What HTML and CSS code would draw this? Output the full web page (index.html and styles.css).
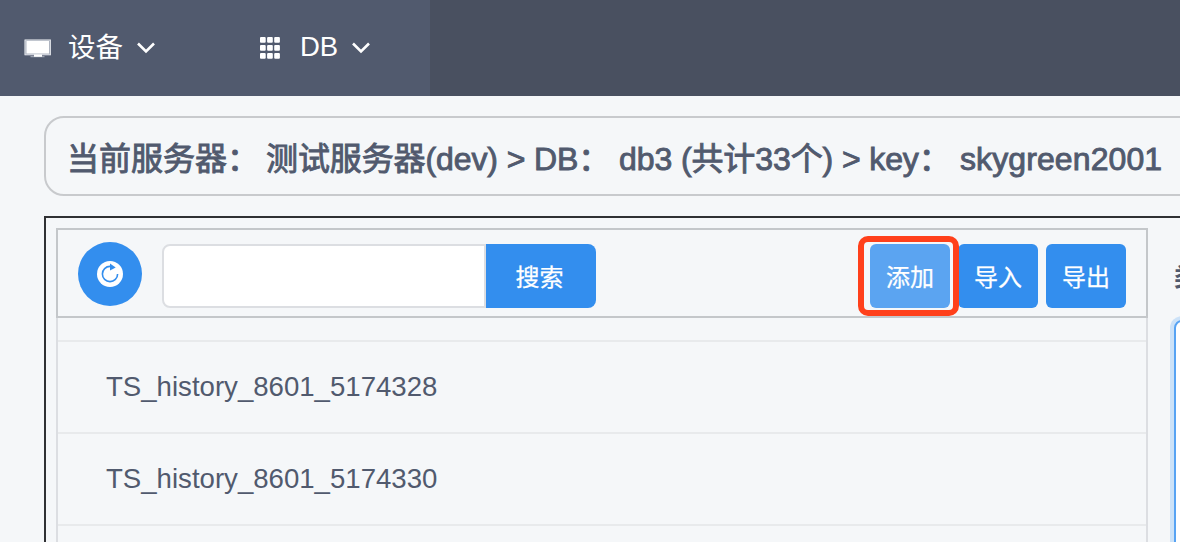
FILE: index.html
```html
<!DOCTYPE html>
<html lang="zh-CN">
<head>
<meta charset="utf-8">
<title>DB</title>
<link rel="stylesheet" href="styles.css">
</head>
<body>
<div class="page">
  <header class="topbar">
    <nav class="menu">
      <a class="menu-item menu-device">
        <svg class="icon-tv" width="28" height="20" viewBox="0 0 28 20"><rect x=".5" y=".5" width="26.5" height="15.8" fill="#aeb4c0"/><rect x="1" y="1" width="25.5" height="14.8" fill="none" stroke="#e8eaee" stroke-width=".7"/><rect x="2.5" y="2" width="22.5" height="12.5" fill="#fff"/><path d="M6.5 17.2h14v1h-14z" fill="#aeb4c0"/><path d="M10 15.5h8v2.3h-8z" fill="#fff"/></svg>
        <span class="menu-cjk">设备</span>
        <svg class="chevron" width="20" height="14" viewBox="0 0 20 14"><path d="M2 2.5l8 8 8-8"/></svg>
      </a>
      <a class="menu-item menu-db">
        <svg class="icon-grid" width="20" height="22" viewBox="0 0 20 22" fill="#fff"><rect width="5.7" height="5.7" rx="1"/><rect x="7.1" width="5.7" height="5.7" rx="1"/><rect x="14.2" width="5.7" height="5.7" rx="1"/><rect y="8" width="5.7" height="5.7" rx="1"/><rect x="7.1" y="8" width="5.7" height="5.7" rx="1"/><rect x="14.2" y="8" width="5.7" height="5.7" rx="1"/><rect y="16" width="5.7" height="5.7" rx="1"/><rect x="7.1" y="16" width="5.7" height="5.7" rx="1"/><rect x="14.2" y="16" width="5.7" height="5.7" rx="1"/></svg>
        <span class="menu-latin">DB</span>
        <svg class="chevron" width="20" height="14" viewBox="0 0 20 14"><path d="M2 2.5l8 8 8-8"/></svg>
      </a>
    </nav>
  </header>

  <div class="crumb">
    <span class="crumb-server">当前服务器：</span><span class="crumb-db">测试服务器(dev) &gt; DB：</span><span class="crumb-count">db3 (共计33个) &gt; key：</span><span class="crumb-key">skygreen2001</span>
  </div>

  <main class="workspace">
    <section class="keys">
      <div class="toolbar">
        <button class="refresh" aria-label="refresh"><svg width="26" height="26" viewBox="0 0 26 26"><circle cx="13" cy="13" r="13" fill="#fff"/><path d="M20.6 13A7.6 7.6 0 1 1 13 5.4" fill="none" stroke="#338eee" stroke-width="1.6"/><path d="M13 2.4v7l5.7-3z" fill="#338eee"/></svg></button>
        <input class="search" type="text">
        <button class="btn btn-search">搜索</button>
        <div class="actions">
          <button class="btn btn-add">添加</button>
          <button class="btn">导入</button>
          <button class="btn">导出</button>
        </div>
      </div>
      <div class="list">
        <div class="row row-cut"></div>
        <div class="row">TS_history_8601_5174328</div>
        <div class="row">TS_history_8601_5174330</div>
        <div class="row"></div>
      </div>
    </section>
    <section class="detail">
      <div class="detail-label">类型</div>
      <div class="editor"></div>
    </section>
  </main>
</div>
</body>
</html>
```
FILE: styles.css
```css
* { box-sizing: border-box; }
body {
  margin: 0;
  background: #f5f7f9;
  color: #515a6e;
  font-family: "Liberation Sans", "Noto Sans CJK SC", sans-serif;
}
.page { width: 1180px; height: 542px; overflow: hidden; }

.topbar { height: 96px; background: #495060; }
.menu { display: flex; width: 430px; height: 96px; background: #515a6e; color: #fff; }
.menu-item { display: flex; align-items: center; height: 94px; white-space: nowrap; }
.menu-device { width: 235px; padding-left: 24px; }
.menu-db { padding-left: 25px; }
.icon-tv { margin: 3px 16px 0 0; }
.icon-grid { margin: 2px 20px 0 0; }
.menu-cjk { width: 68px; margin-top: -4px; font: 27.5px/40px "Noto Sans CJK SC", sans-serif; }
.menu-latin { width: 51px; font-size: 27.5px; line-height: 40px; }
.chevron { margin-top: 2px; fill: none; stroke: #fff; stroke-width: 2.6; }

.crumb {
  display: flex;
  width: 1300px;
  height: 80px;
  margin: 20px 0 0 44px;
  padding-left: 21px;
  border: 2px solid #c8cacd;
  border-radius: 20px;
  font-size: 32px;
  line-height: 82px;
  white-space: nowrap;
  -webkit-text-stroke: .9px #515a6e;
}
.crumb-server { width: 199px; }
.crumb-db { width: 353px; letter-spacing: -.1px; }
.crumb-count { width: 341px; letter-spacing: -.1px; }
.crumb-key { letter-spacing: .1px; }

.workspace {
  display: flex;
  width: 1300px;
  height: 500px;
  margin: 20px 0 0 44px;
  padding: 10px;
  border: 2px solid #303134;
}
.keys { flex: none; width: 1092px; }
.toolbar { display: flex; height: 90px; padding: 14px 20px; border: 2px solid #c4c7ca; }
.refresh {
  display: grid;
  place-items: center;
  flex: none;
  width: 64px;
  height: 64px;
  margin-top: -2px;
  padding: 0;
  border: 0;
  border-radius: 50%;
  background: #338eee;
}
.search {
  width: 324px;
  height: 64px;
  margin: 0 0 0 20px;
  border: 2px solid #dcdee2;
  border-radius: 8px 0 0 8px;
  background: #fff;
}
.btn {
  width: 80px;
  height: 64px;
  padding: 0;
  border: 0;
  border-radius: 6px;
  background: #338eee;
  color: #fff;
  font: 24px/36px "Noto Sans CJK SC", sans-serif;
  -webkit-text-stroke: .25px #fff;
}
.btn-search { width: 110px; padding-right: 3px; border-radius: 0 8px 8px 0; }
.actions { display: flex; gap: 8px; margin-left: auto; }
.btn-add { position: relative; background: #5ba4f1; }
.btn-add::after {
  content: "";
  position: absolute;
  inset: -8px -9px -8px -12px;
  border: 6px solid #ff401b;
  border-radius: 10px;
}
.list { height: 400px; border: solid #dcdee2; border-width: 0 2px; }
.row {
  height: 92px;
  padding-left: 48px;
  border-bottom: 2px solid #e8eaec;
  font-size: 27.6px;
  line-height: 89px;
}
.row-cut { height: 24px; }

.detail { width: 180px; padding-left: 26px; }
.detail-label { height: 92px; font: 700 25px/94px "Noto Sans CJK SC", sans-serif; }
.editor {
  height: 300px;
  border: 2px solid #57a3f3;
  border-radius: 8px;
  background: #fff;
  box-shadow: 0 0 0 4px #cce2f8;
}
```
